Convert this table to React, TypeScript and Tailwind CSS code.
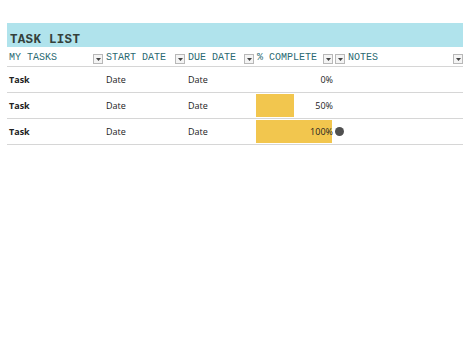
import React from 'react';

const rows = [
  { task: 'Task', start: 'Date', due: 'Date', pct: 0 },
  { task: 'Task', start: 'Date', due: 'Date', pct: 50 },
  { task: 'Task', start: 'Date', due: 'Date', pct: 100 },
];

function Drop() {
  return (
    <span className="flex h-[10px] w-[10px] items-center justify-center border border-[#b8b8b8] bg-[#f4f4f4]">
      <svg width="5" height="3" viewBox="0 0 5 3">
        <path d="M0 0h5L2.5 3z" fill="#444" />
      </svg>
    </span>
  );
}

const mono = { fontFamily: '"Liberation Mono", "Courier New", monospace' };

export default function App() {
  return (
    <div className="h-[355px] w-[463px] overflow-hidden bg-white pt-[23px] pl-[7px]">
      <div className="flex h-[24px] items-end bg-[#b0e3ec] pb-[1px] pl-[3px]">
        <span className="text-[12.5px] font-bold leading-none tracking-[0.3px] text-[#34403a]" style={mono}>
          TASK LIST
        </span>
      </div>

      <div className="grid grid-cols-[97px_82px_69px_91px_117px] border-b border-[#d6d6d6]">
        <div className="flex h-[19px] items-end justify-between pb-[2px] pl-[2px] pr-[1px]">
          <span className="text-[10px] leading-[12px] text-[#2a6a72]" style={mono}>MY TASKS</span>
          <Drop />
        </div>
        <div className="flex h-[19px] items-end justify-between pb-[2px] pl-[2px] pr-[1px]">
          <span className="text-[10px] leading-[12px] text-[#2a6a72]" style={mono}>START DATE</span>
          <Drop />
        </div>
        <div className="flex h-[19px] items-end justify-between pb-[2px] pl-[2px] pr-[1px]">
          <span className="text-[10px] leading-[12px] text-[#2a6a72]" style={mono}>DUE DATE</span>
          <Drop />
        </div>
        <div className="flex h-[19px] items-end justify-between pb-[2px] pl-[2px] pr-[1px]">
          <span className="text-[10px] leading-[12px] text-[#2a6a72]" style={mono}>% COMPLETE</span>
          <span className="flex gap-[2px]"><Drop /><Drop /></span>
        </div>
        <div className="flex h-[19px] items-end justify-between pb-[2px] pl-[2px]">
          <span className="text-[10px] leading-[12px] text-[#2a6a72]" style={mono}>NOTES</span>
          <Drop />
        </div>
      </div>

      {rows.map((r, i) => (
        <div
          key={i}
          className="grid h-[26px] grid-cols-[97px_82px_69px_91px_117px] items-center border-b border-[#d6d6d6] text-[9px] text-[#222]"
          style={{ fontFamily: '"Open Sans", "Noto Sans", sans-serif' }}
        >
          <div className="pl-[2px] font-bold">{r.task}</div>
          <div className="pl-[2px]">{r.start}</div>
          <div className="pl-[2px]">{r.due}</div>
          <div className="flex h-full items-center pl-[1px]">
            <div className="relative h-[23px] w-[77px]">
              <div className="h-full bg-[#f2c64e]" style={{ width: `${(r.pct / 100) * 76}px` }} />
              <span className="absolute right-0 top-1/2 -translate-y-1/2">{r.pct}%</span>
            </div>
            {r.pct === 100 && <span className="ml-[2px] h-[9px] w-[9px] rounded-full bg-[#505050]" />}
          </div>
          <div />
        </div>
      ))}
    </div>
  );
}
